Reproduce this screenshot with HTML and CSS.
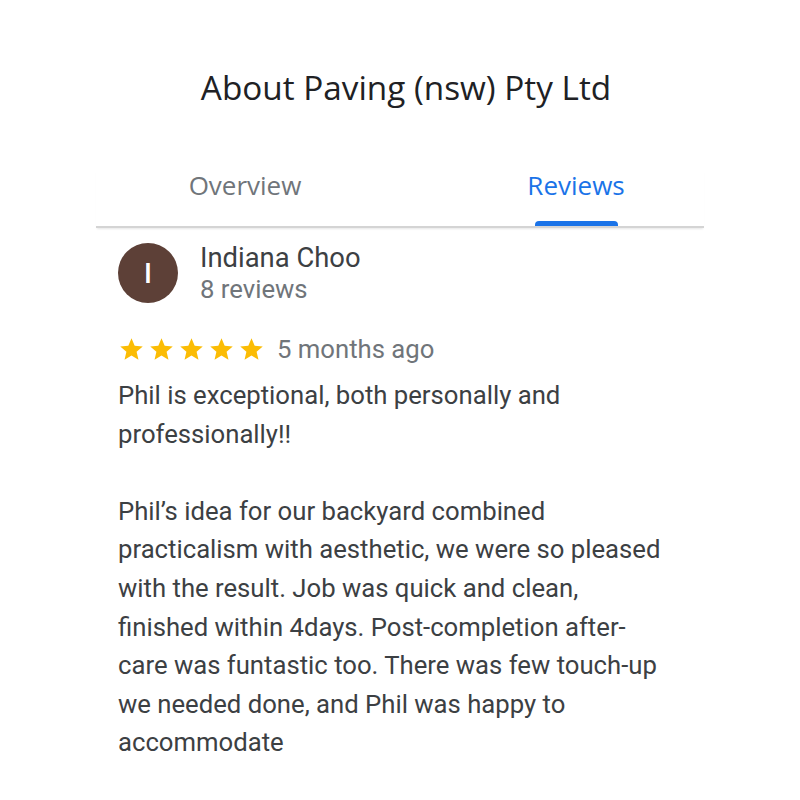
FILE: index.html
```html
<!DOCTYPE html>
<html lang="en">
<head>
    <meta charset="UTF-8">
    <meta name="viewport" content="width=device-width, initial-scale=1.0">
    <title>About Paving (nsw) Pty Ltd</title>
    <link rel="stylesheet" href="styles.css">
</head>

<body>
<main>
    <div class="panel">
        <h1 class="title">About Paving (nsw) Pty Ltd</h1>

        <div class="tabs">
            <div class="tab">Overview</div>
            <div class="tab active">Reviews</div>
        </div>

        <div class="review">
            <div class="reviewer">
                <div class="avatar">I</div>
                <div class="reviewer-info">
                    <div class="reviewer-name">Indiana Choo</div>
                    <div class="reviewer-count">8 reviews</div>
                </div>
            </div>

            <div class="rating">
                <div class="stars">
                    <svg viewBox="0 0 24 24"><path d="M12 17.27L18.18 21l-1.64-7.03L22 9.24l-7.19-.61L12 2 9.19 8.63 2 9.24l5.46 4.73L5.82 21z"/></svg>
                    <svg viewBox="0 0 24 24"><path d="M12 17.27L18.18 21l-1.64-7.03L22 9.24l-7.19-.61L12 2 9.19 8.63 2 9.24l5.46 4.73L5.82 21z"/></svg>
                    <svg viewBox="0 0 24 24"><path d="M12 17.27L18.18 21l-1.64-7.03L22 9.24l-7.19-.61L12 2 9.19 8.63 2 9.24l5.46 4.73L5.82 21z"/></svg>
                    <svg viewBox="0 0 24 24"><path d="M12 17.27L18.18 21l-1.64-7.03L22 9.24l-7.19-.61L12 2 9.19 8.63 2 9.24l5.46 4.73L5.82 21z"/></svg>
                    <svg viewBox="0 0 24 24"><path d="M12 17.27L18.18 21l-1.64-7.03L22 9.24l-7.19-.61L12 2 9.19 8.63 2 9.24l5.46 4.73L5.82 21z"/></svg>
                </div>
                <span class="review-date">5 months ago</span>
            </div>

            <div class="review-text">
                <p>Phil is exceptional, both personally and professionally!!</p>
                <p>Phil’s idea for our backyard combined practicalism with aesthetic, we were so pleased with the result. Job was quick and clean, finished within 4days. Post-completion after-care was funtastic too. There was few touch-up we needed done, and Phil was happy to accommodate</p>
            </div>
        </div>
    </div>
</main>
</body>
</html>
```

FILE: styles.css
```css
body {
    font-family: Roboto, "Liberation Sans", sans-serif;
    background-color: #ffffff;
    margin: 0;
    padding: 0;
}

.panel {
    width: 608px;
    margin: 0 auto;
    padding-top: 65px;
}

.title {
    margin: 0;
    font-family: "Open Sans", Roboto, sans-serif;
    font-weight: 500;
    font-size: 33.3px;
    line-height: 44px;
    color: #202124;
    text-align: center;
    padding-left: 12px;
}

.tabs {
    display: flex;
    gap: 181px;
    padding-left: 74px;
    margin-top: 61px;
    border-bottom: 2px solid #d4d4d4;
    box-shadow: 0 2px 2px -1px rgba(0, 0, 0, 0.1);
}

.tab {
    width: 150px;
    text-align: center;
    font-family: "Open Sans", Roboto, sans-serif;
    font-size: 26px;
    line-height: 30px;
    padding-bottom: 26px;
    color: #70757a;
    position: relative;
}

.tab.active {
    color: #1a73e8;
}

.tab.active::after {
    content: "";
    position: absolute;
    left: 34px;
    right: 33px;
    bottom: 0;
    height: 5px;
    border-radius: 4px 4px 0 0;
    background-color: #1a73e8;
}

.review {
    padding: 14px 22px 0;
}

.reviewer {
    display: flex;
    align-items: center;
    gap: 22px;
}

.avatar {
    width: 60px;
    height: 60px;
    border-radius: 50%;
    background-color: #5d4037;
    color: #ffffff;
    display: flex;
    align-items: center;
    justify-content: center;
    font-size: 28px;
    font-weight: 500;
}

.reviewer-name {
    font-size: 27.4px;
    line-height: 32px;
    color: #3c4043;
}

.reviewer-count {
    font-size: 25.7px;
    line-height: 30px;
    color: #70757a;
}

.rating {
    display: flex;
    align-items: center;
    gap: 12px;
    margin-top: 30px;
}

.stars {
    display: flex;
    gap: 3px;
}

.stars svg {
    width: 27px;
    height: 27px;
    fill: #fbbc04;
}

.review-date {
    font-size: 25.7px;
    line-height: 30px;
    color: #70757a;
}

.review-text {
    width: 550px;
    margin-top: 12px;
    font-size: 25.7px;
    line-height: 38.6px;
    color: #3c4043;
}

.review-text p {
    margin: 0 0 38.6px;
}
```
